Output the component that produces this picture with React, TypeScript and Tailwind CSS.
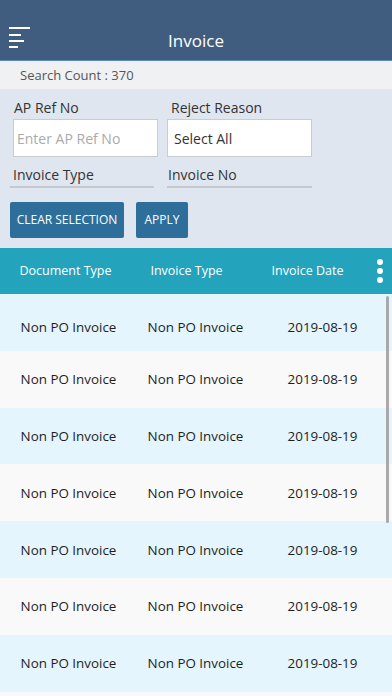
const ROWS = Array.from({ length: 7 }, () => ({ doc: 'Non PO Invoice', type: 'Non PO Invoice', date: '2019-08-19' }))

function MenuIcon() {
  return (
    <svg width="24" height="24" viewBox="0 0 24 24" className="block">
      <rect x="0" y="0" width="21" height="2" fill="#fff" />
      <rect x="0" y="7" width="12" height="2" fill="#fff" />
      <rect x="0" y="13" width="15" height="2" fill="#fff" />
      <rect x="0" y="19" width="9" height="2" fill="#fff" />
    </svg>
  )
}

export default function App() {
  return (
    <div className="w-[392px] h-[696px] overflow-hidden bg-[#f9f9f9] font-['Open_Sans',sans-serif] text-[#1e1e1e]">
      <div className="h-[61px] bg-[#405d7f] border-b border-[#5a8bc4] flex items-end pb-[9px] relative">
        <div className="absolute left-[9px] top-[27px]"><MenuIcon /></div>
        <div className="w-full text-center text-white text-[17px] leading-[24px] mb-[-2px]">Invoice</div>
      </div>
      <div className="h-[28px] bg-[#f0f1f3] pl-[20px] flex items-center text-[13px] text-[#555] pt-[1px]">Search Count : 370</div>
      <div className="bg-[#dfe6f0] h-[159px] pt-[9px]">
        <div className="flex gap-[9px] pl-[13px]">
          <div className="w-[145px]">
            <div className="text-[14px] leading-[20px] text-[#333] pl-px">AP Ref No</div>
            <div className="mt-[1px] h-[38px] bg-white border border-[#c9cdd3] flex items-center pl-[3px] text-[14px] text-[#aaa]">Enter AP Ref No</div>
          </div>
          <div className="w-[145px]">
            <div className="text-[14px] leading-[20px] text-[#333] pl-[4px]">Reject Reason</div>
            <div className="mt-[1px] h-[38px] bg-white border border-[#c9cdd3] flex items-center pl-[6px] text-[14px] text-[#333]">Select All</div>
          </div>
        </div>
        <div className="flex gap-[13px] pl-[10px] mt-[8px]">
          <div className="w-[144px] border-b-2 border-[#c4c9cf] pl-[3px] text-[14px] leading-[20px] text-[#333] pb-[1px]">Invoice Type</div>
          <div className="w-[145px] border-b-2 border-[#c4c9cf] pl-[1px] text-[14px] leading-[20px] text-[#333] pb-[1px]">Invoice No</div>
        </div>
        <div className="flex gap-[12px] pl-[10px] mt-[14px]">
          <button className="w-[114px] h-[36px] bg-[#2e6e9a] rounded-[2px] text-white text-[12px] font-medium">CLEAR SELECTION</button>
          <button className="w-[52px] h-[36px] bg-[#2e6e9a] rounded-[2px] text-white text-[12px] font-medium">APPLY</button>
        </div>
      </div>
      <div className="h-[46px] bg-[#24a3bd] flex items-center pl-[5px] text-white text-[12.5px] font-medium">
        <div className="w-[121px] text-center">Document Type</div>
        <div className="w-[121px] text-center">Invoice Type</div>
        <div className="w-[121px] text-center">Invoice Date</div>
        <div className="flex flex-col gap-[3px] items-center ml-[9px]">
          <span className="w-[6px] h-[6px] rounded-full bg-white" />
          <span className="w-[6px] h-[6px] rounded-full bg-white" />
          <span className="w-[6px] h-[6px] rounded-full bg-white" />
        </div>
      </div>
      <div className="relative">
        {ROWS.map((r, i) => (
          <div key={i} className={`h-[56.8px] flex items-center pl-[5px] text-[13.4px] ${i === 0 ? 'pt-[9px]' : ''} ${i % 2 === 0 ? 'bg-[#e4f5fd]' : 'bg-[#f9f9f9]'}`}>
            <div className="w-[127px] text-center">{r.doc}</div>
            <div className="w-[127px] text-center">{r.type}</div>
            <div className="w-[127px] text-center">{r.date}</div>
          </div>
        ))}
        <div className="absolute left-[386px] top-[2px] w-[3px] h-[227px] bg-[#a9a9a9] rounded-full" />
      </div>
    </div>
  )
}
